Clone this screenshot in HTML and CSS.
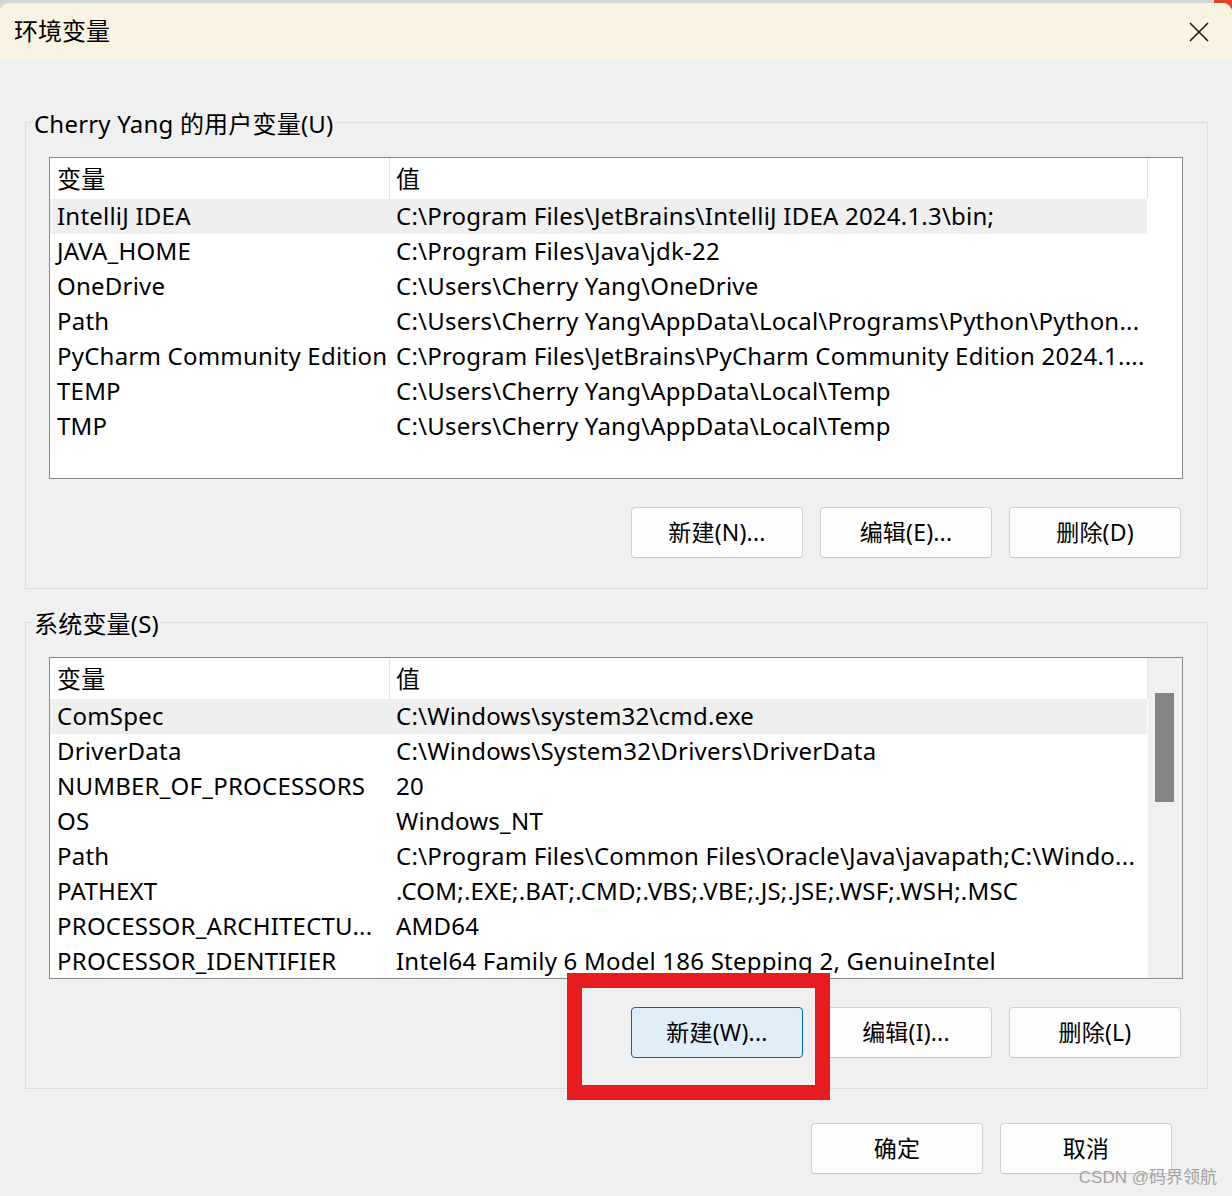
FILE: index.html
```html
<!DOCTYPE html>
<html lang="zh-CN">
<head>
<meta charset="utf-8">
<title>环境变量</title>
<link rel="stylesheet" href="styles.css">
</head>
<body>
<div class="screen">
  <div class="behind-red"></div>
  <div class="dialog">
    <div class="titlebar">
      <span class="title">环境变量</span>
      <svg class="close" viewBox="0 0 20 20" width="20" height="20"><path d="M1 1 L19 19 M19 1 L1 19" stroke="#1a1a1a" stroke-width="1.6" fill="none"/></svg>
    </div>
    <div class="body">
      <fieldset class="group">
        <legend>Cherry Yang 的用户变量(U)</legend>
        <div class="group-inner">
          <div class="list">
            <div class="list-main">
              <div class="row head"><div class="c1">变量</div><div class="c2">值</div></div>
              <div class="row sel"><div class="c1">IntelliJ IDEA</div><div class="c2">C:\Program Files\JetBrains\IntelliJ IDEA 2024.1.3\bin;</div></div>
              <div class="row"><div class="c1">JAVA_HOME</div><div class="c2">C:\Program Files\Java\jdk-22</div></div>
              <div class="row"><div class="c1">OneDrive</div><div class="c2">C:\Users\Cherry Yang\OneDrive</div></div>
              <div class="row"><div class="c1">Path</div><div class="c2">C:\Users\Cherry Yang\AppData\Local\Programs\Python\Python...</div></div>
              <div class="row"><div class="c1">PyCharm Community Edition</div><div class="c2">C:\Program Files\JetBrains\PyCharm Community Edition 2024.1....</div></div>
              <div class="row"><div class="c1">TEMP</div><div class="c2">C:\Users\Cherry Yang\AppData\Local\Temp</div></div>
              <div class="row"><div class="c1">TMP</div><div class="c2">C:\Users\Cherry Yang\AppData\Local\Temp</div></div>
            </div>
          </div>
          <div class="btns">
            <button class="btn">新建(N)...</button>
            <button class="btn">编辑(E)...</button>
            <button class="btn">删除(D)</button>
          </div>
        </div>
      </fieldset>

      <fieldset class="group second">
        <legend>系统变量(S)</legend>
        <div class="group-inner">
          <div class="list">
            <div class="list-main">
              <div class="row head"><div class="c1">变量</div><div class="c2">值</div></div>
              <div class="row sel"><div class="c1">ComSpec</div><div class="c2">C:\Windows\system32\cmd.exe</div></div>
              <div class="row"><div class="c1">DriverData</div><div class="c2">C:\Windows\System32\Drivers\DriverData</div></div>
              <div class="row"><div class="c1">NUMBER_OF_PROCESSORS</div><div class="c2">20</div></div>
              <div class="row"><div class="c1">OS</div><div class="c2">Windows_NT</div></div>
              <div class="row"><div class="c1">Path</div><div class="c2">C:\Program Files\Common Files\Oracle\Java\javapath;C:\Windo...</div></div>
              <div class="row"><div class="c1">PATHEXT</div><div class="c2">.COM;.EXE;.BAT;.CMD;.VBS;.VBE;.JS;.JSE;.WSF;.WSH;.MSC</div></div>
              <div class="row"><div class="c1">PROCESSOR_ARCHITECTU...</div><div class="c2">AMD64</div></div>
              <div class="row"><div class="c1">PROCESSOR_IDENTIFIER</div><div class="c2">Intel64 Family 6 Model 186 Stepping 2, GenuineIntel</div></div>
            </div>
            <div class="scrollbar"><div class="thumb"></div></div>
          </div>
          <div class="btns">
            <button class="btn focus">新建(W)...</button>
            <button class="btn">编辑(I)...</button>
            <button class="btn">删除(L)</button>
          </div>
        </div>
      </fieldset>

      <div class="footer">
        <button class="btn">确定</button>
        <button class="btn">取消</button>
      </div>
    </div>
  </div>
  <div class="redbox"></div>
  <div class="watermark">CSDN @码界领航</div>
</div>
</body>
</html>
```

FILE: styles.css
```css
* { box-sizing: border-box; }
html, body {
  margin: 0;
  padding: 0;
  width: 1232px;
  height: 1196px;
  overflow: hidden;
}
body {
  font-family: "Noto Sans", "Noto Sans CJK SC", sans-serif;
  color: #000;
  background: #bdbdbd;
}
.screen {
  position: relative;
  width: 1232px;
  height: 1196px;
  padding-top: 3px;
  background: linear-gradient(#d6d6d6, #b3b3b3);
}
.behind-red {
  position: absolute;
  top: 0;
  right: 0;
  width: 18px;
  height: 18px;
  background: #e0452b;
}
.dialog {
  position: relative;
  height: 1193px;
  background: #f0f0f0;
  border-top-left-radius: 9px;
  border-top-right-radius: 9px;
  overflow: hidden;
}
.titlebar {
  height: 57px;
  background: #f9f3e2;
  display: flex;
  align-items: center;
  justify-content: space-between;
  padding: 0 23px 0 14px;
}
.title {
  font-size: 24px;
  line-height: 28px;
  margin-top: -2px;
}
.close {
  display: block;
}
.body {
  padding: 0 24px 0 25px;
}
.group {
  margin: 48px 0 0 0;
  padding: 0;
  border: 1px solid #dcdcdc;
  min-width: 0;
}
.group.second {
  margin-top: 19px;
}
.group legend {
  margin-left: 6px;
  padding: 4px 2px 0;
  font-size: 24px;
  line-height: 24px;
  letter-spacing: 0.2px;
  white-space: nowrap;
}
.group-inner {
  padding: 21px 24px 30px 23px;
}
.list {
  height: 322px;
  border: 1px solid #868a8f;
  background: #fff;
  display: flex;
  overflow: hidden;
}
.list-main {
  width: 1098px;
  flex: none;
}
.row {
  display: flex;
  height: 35px;
  line-height: 33px;
  font-size: 24px;
  letter-spacing: 0.22px;
  white-space: nowrap;
  width: 1097px;
}
.row .c1 {
  width: 340px;
  flex: none;
  padding-left: 7px;
  overflow: hidden;
}
.row .c2 {
  flex: 1;
  padding-left: 6px;
  overflow: hidden;
}
.row.head {
  height: 41px;
  line-height: 41px;
  width: 1098px;
}
.row.head .c1 {
  width: 340px;
  border-right: 1px solid #e5e5e5;
}
.row.head .c2 {
  border-right: 1px solid #e5e5e5;
}
.row.sel {
  background: #efefef;
}
.scrollbar {
  flex: 1;
  background: #f0f0f0;
  padding: 35px 0 0 7px;
}
.thumb {
  width: 19px;
  height: 109px;
  background: #858585;
}
.btns {
  display: flex;
  justify-content: flex-end;
  gap: 17px;
  margin-top: 28px;
  padding-right: 2px;
}
.btn {
  width: 172px;
  height: 51px;
  border: 1px solid #d1d1d1;
  border-bottom-color: #c4c4c4;
  border-radius: 4px;
  background: #fdfdfd;
  font-family: "Noto Sans", "Noto Sans CJK SC", sans-serif;
  font-size: 23px;
  letter-spacing: 0.2px;
  color: #000;
  padding: 0;
  line-height: 49px;
}
.btn.focus {
  background: #e0eef9;
  border-color: #0067c0;
}
.footer {
  display: flex;
  justify-content: flex-end;
  gap: 17px;
  margin-top: 34px;
  padding-right: 36px;
}
.redbox {
  position: absolute;
  left: 567px;
  top: 973px;
  width: 263px;
  height: 127px;
  border: 15px solid #e81c1e;
}
.watermark {
  position: absolute;
  right: 15px;
  top: 1166px;
  font-size: 17px;
  line-height: 24px;
  color: #a3a3a3;
  font-family: "Liberation Sans", "Noto Sans CJK SC", sans-serif;
}
```
